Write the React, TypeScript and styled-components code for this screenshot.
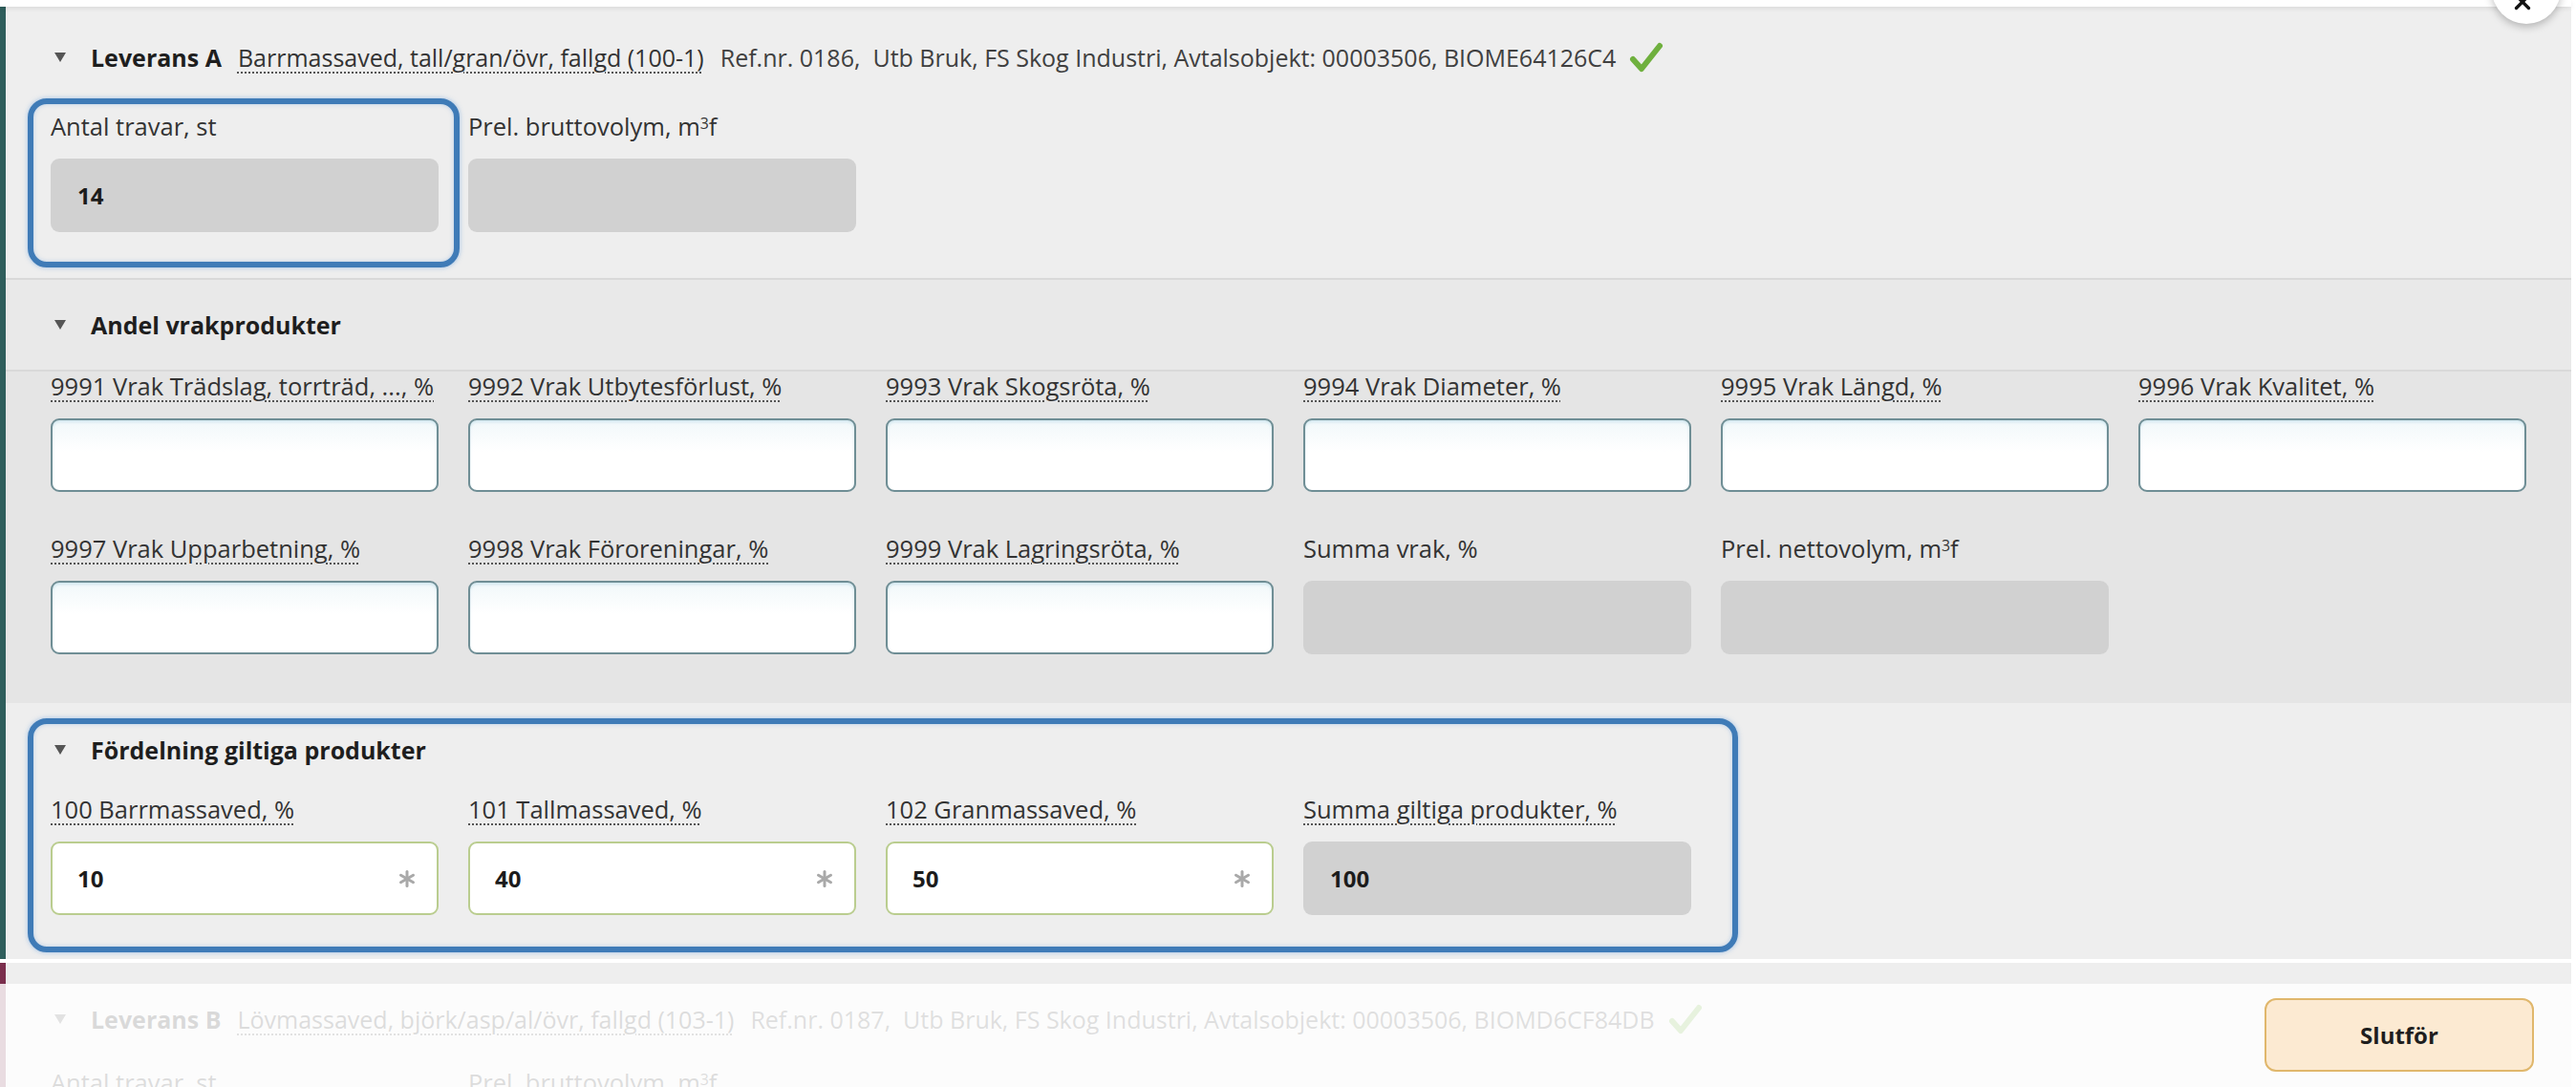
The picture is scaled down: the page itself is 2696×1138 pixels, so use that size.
import React from "react";
import styled, { createGlobalStyle, css } from "styled-components";
import { Asterisk, X } from "lucide-react";

const GlobalStyle = createGlobalStyle`
  html, body { margin: 0; padding: 0; background: #ffffff; }
  body {
    font-family: "Open Sans", "Noto Sans", "Liberation Sans", sans-serif;
    color: #333333;
    overflow: hidden;
  }
  * { box-sizing: border-box; }
`;

const Page = styled.div`
  position: relative;
  width: 2696px;
  height: 1138px;
  overflow: hidden;
  background: #ffffff;
  padding-right: 5px;
`;

const TopStrip = styled.div`
  position: relative;
  z-index: 2;
  height: 7px;
  background: #ffffff;
  box-shadow: 0 2px 5px rgba(0, 0, 0, 0.08);
`;

const Delivery = styled.section<{ $accent: string; $gapTop?: boolean }>`
  display: flex;
  flex-direction: column;
  background: #eeeeee;
  border-left: 6px solid ${(p) => p.$accent};
  margin-top: ${(p) => (p.$gapTop ? "4px" : "0")};
`;

const DeliveryTop = styled.div<{ $padTop: number }>`
  display: flex;
  flex-direction: column;
  gap: 32px;
  padding: ${(p) => p.$padTop}px 0 48px 47px;
`;

const HeaderRow = styled.div`
  display: flex;
  align-items: center;
  height: 50px;
  padding-left: 4px;
  font-size: 25px;
  white-space: nowrap;
`;

const Caret = styled.svg`
  width: 12px;
  height: 10px;
  flex: none;
  fill: #555555;
`;

const Title = styled.span`
  margin-left: 26px;
  font-weight: 700;
  color: #1e1e1e;
`;

const Product = styled.span`
  margin-left: 17px;
  color: #333333;
  text-decoration: underline dotted #555555;
  text-decoration-thickness: 2px;
  text-underline-offset: 5px;
`;

const Meta = styled.span`
  margin-left: 17px;
  color: #404040;
`;

const CheckMark = styled.svg`
  margin-left: 14px;
  width: 36px;
  height: 34px;
  flex: none;
`;

const FieldGrid = styled.div`
  display: grid;
  grid-template-columns: repeat(6, 406px);
  column-gap: 31px;
  row-gap: 44px;
`;

const FieldCell = styled.div<{ $highlight?: boolean }>`
  position: relative;
  display: flex;
  flex-direction: column;
  gap: 19px;
  ${(p) =>
    p.$highlight &&
    css`
      &::after {
        content: "";
        position: absolute;
        top: -14px;
        left: -24px;
        right: -22px;
        bottom: -37px;
        border: 6px solid #3f7bb7;
        border-radius: 20px;
        box-shadow: 0 0 5px rgba(120, 170, 225, 0.7), inset 0 0 4px rgba(120, 170, 225, 0.5);
        pointer-events: none;
      }
    `}
`;

const Label = styled.label<{ $dotted?: boolean }>`
  height: 30px;
  line-height: 30px;
  font-size: 25.5px;
  color: #333333;
  white-space: nowrap;
  ${(p) =>
    p.$dotted &&
    css`
      text-decoration: underline dotted #555555;
      text-decoration-thickness: 2px;
      text-underline-offset: 5px;
    `}
`;

const Sup = styled.span`
  font-size: 0.62em;
  vertical-align: 0.45em;
  line-height: 0;
`;

type Variant = "edit" | "readonly" | "valid";

const InputBox = styled.div<{ $variant: Variant }>`
  height: 77px;
  display: flex;
  align-items: center;
  padding: 0 16px 0 26px;
  border-radius: 9px;
  border: 2px solid transparent;
  ${(p) =>
    p.$variant === "edit" &&
    css`
      background: linear-gradient(#f1f8fa, #ffffff 45%);
      border-color: #6f8e95;
      box-shadow: inset 0 2px 3px rgba(150, 200, 220, 0.35);
    `}
  ${(p) =>
    p.$variant === "readonly" &&
    css`
      background: #d1d1d1;
    `}
  ${(p) =>
    p.$variant === "valid" &&
    css`
      background: #ffffff;
      border-color: #bacd8f;
    `}
`;

const ValueInput = styled.input`
  flex: 1;
  min-width: 0;
  border: none;
  outline: none;
  background: transparent;
  padding: 0;
  font-family: inherit;
  font-size: 24px;
  font-weight: 700;
  color: #1c1c1c;
`;

const Required = styled(Asterisk)`
  flex: none;
  color: #a9a9a9;
`;

const SubHeader = styled.div`
  display: flex;
  align-items: center;
  height: 98px;
  padding-left: 51px;
  background: #e9e9e9;
  border-top: 2px solid #d9d9d9;
  border-bottom: 2px solid #d9d9d9;
  font-size: 25px;
`;

const SubTitle = styled.span`
  margin-left: 26px;
  font-weight: 700;
  color: #1e1e1e;
`;

const ScrapArea = styled.div`
  background: #e5e5e5;
  padding: 0 0 51px 47px;
`;

const Distribution = styled.div`
  position: relative;
  display: flex;
  flex-direction: column;
  gap: 22px;
  padding: 24px 0 46px 47px;
  &::after {
    content: "";
    position: absolute;
    top: 16px;
    left: 23px;
    width: 1778px;
    bottom: 7px;
    border: 6px solid #3f7bb7;
    border-radius: 20px;
    box-shadow: 0 0 5px rgba(120, 170, 225, 0.7), inset 0 0 4px rgba(120, 170, 225, 0.5);
    pointer-events: none;
  }
`;

const SectionBBody = styled.div`
  display: flex;
  flex-direction: column;
  gap: 26px;
  padding: 34px 0 60px 47px;
`;

const Footer = styled.footer`
  position: absolute;
  left: 0;
  right: 0;
  top: 1030px;
  bottom: 0;
  display: flex;
  justify-content: flex-end;
  align-items: flex-start;
  padding: 15px 44px 0 0;
  background: rgba(255, 255, 255, 0.83);
  z-index: 3;
`;

const FinishButton = styled.button`
  width: 282px;
  height: 77px;
  border-radius: 12px;
  border: 2px solid #e0b76c;
  background: #fcead2;
  font-family: inherit;
  font-size: 24px;
  font-weight: 700;
  color: #1e1e1e;
  cursor: pointer;
`;

const CloseButton = styled.button`
  position: absolute;
  top: -47px;
  left: 2608px;
  width: 72px;
  height: 72px;
  border-radius: 50%;
  border: none;
  background: #ffffff;
  box-shadow: 0 3px 8px rgba(0, 0, 0, 0.25);
  display: flex;
  align-items: flex-end;
  justify-content: center;
  padding: 0 8px 10px 0;
  color: #111111;
  z-index: 4;
`;

type FieldDef = {
  label: React.ReactNode;
  key: string;
  dotted?: boolean;
  variant: Variant;
  value?: string;
  required?: boolean;
  highlight?: boolean;
};

const CaretIcon = () => (
  <Caret viewBox="0 0 12 10">
    <path d="M0 0 H12 L6 10 Z" />
  </Caret>
);

const Check = ({ faded }: { faded?: boolean }) => (
  <CheckMark viewBox="0 0 36 34">
    <path
      d="M4 19 L13 29 L32 5"
      fill="none"
      stroke={faded ? "#9ccc6e" : "#6fb03e"}
      strokeWidth="6"
      strokeLinecap="round"
      strokeLinejoin="round"
    />
  </CheckMark>
);

const Field = ({ f }: { f: FieldDef }) => (
  <FieldCell $highlight={f.highlight}>
    <Label $dotted={f.dotted}>{f.label}</Label>
    <InputBox $variant={f.variant}>
      <ValueInput readOnly={f.variant === "readonly"} defaultValue={f.value ?? ""} />
      {f.required && <Required size={30} strokeWidth={2.4} />}
    </InputBox>
  </FieldCell>
);

const brutto = (
  <>
    Prel. bruttovolym, m<Sup>3</Sup>f
  </>
);
const netto = (
  <>
    Prel. nettovolym, m<Sup>3</Sup>f
  </>
);

const topFields: FieldDef[] = [
  { key: "antal", label: "Antal travar, st", variant: "readonly", value: "14", highlight: true },
  { key: "brutto", label: brutto, variant: "readonly" },
];

const scrapFields: FieldDef[] = [
  { key: "9991", label: "9991 Vrak Trädslag, torrträd, ..., %", dotted: true, variant: "edit" },
  { key: "9992", label: "9992 Vrak Utbytesförlust, %", dotted: true, variant: "edit" },
  { key: "9993", label: "9993 Vrak Skogsröta, %", dotted: true, variant: "edit" },
  { key: "9994", label: "9994 Vrak Diameter, %", dotted: true, variant: "edit" },
  { key: "9995", label: "9995 Vrak Längd, %", dotted: true, variant: "edit" },
  { key: "9996", label: "9996 Vrak Kvalitet, %", dotted: true, variant: "edit" },
  { key: "9997", label: "9997 Vrak Upparbetning, %", dotted: true, variant: "edit" },
  { key: "9998", label: "9998 Vrak Föroreningar, %", dotted: true, variant: "edit" },
  { key: "9999", label: "9999 Vrak Lagringsröta, %", dotted: true, variant: "edit" },
  { key: "summa", label: "Summa vrak, %", variant: "readonly" },
  { key: "netto", label: netto, variant: "readonly" },
];

const distFields: FieldDef[] = [
  { key: "100", label: "100 Barrmassaved, %", dotted: true, variant: "valid", value: "10", required: true },
  { key: "101", label: "101 Tallmassaved, %", dotted: true, variant: "valid", value: "40", required: true },
  { key: "102", label: "102 Granmassaved, %", dotted: true, variant: "valid", value: "50", required: true },
  { key: "sum", label: "Summa giltiga produkter, %", dotted: true, variant: "readonly", value: "100" },
];

export default function App() {
  return (
    <Page>
      <GlobalStyle />
      <TopStrip />
      <CloseButton aria-label="Stäng">
        <X size={26} strokeWidth={3} />
      </CloseButton>

      <Delivery $accent="#2f5e5c">
        <DeliveryTop $padTop={28}>
          <HeaderRow>
            <CaretIcon />
            <Title>Leverans A</Title>
            <Product>Barrmassaved, tall/gran/övr, fallgd (100-1)</Product>
            <Meta>
              Ref.nr. 0186,&nbsp; Utb Bruk, FS Skog Industri, Avtalsobjekt: 00003506, BIOME64126C4
            </Meta>
            <Check />
          </HeaderRow>
          <FieldGrid>
            {topFields.map((f) => (
              <Field key={f.key} f={f} />
            ))}
          </FieldGrid>
        </DeliveryTop>

        <SubHeader>
          <CaretIcon />
          <SubTitle>Andel vrakprodukter</SubTitle>
        </SubHeader>
        <ScrapArea>
          <FieldGrid>
            {scrapFields.map((f) => (
              <Field key={f.key} f={f} />
            ))}
          </FieldGrid>
        </ScrapArea>

        <Distribution>
          <HeaderRow>
            <CaretIcon />
            <Title>Fördelning giltiga produkter</Title>
          </HeaderRow>
          <FieldGrid>
            {distFields.map((f) => (
              <Field key={f.key} f={f} />
            ))}
          </FieldGrid>
        </Distribution>
      </Delivery>

      <Delivery $accent="#7b2f4d" $gapTop>
        <SectionBBody>
          <HeaderRow>
            <CaretIcon />
            <Title>Leverans B</Title>
            <Product>Lövmassaved, björk/asp/al/övr, fallgd (103-1)</Product>
            <Meta>
              Ref.nr. 0187,&nbsp; Utb Bruk, FS Skog Industri, Avtalsobjekt: 00003506, BIOMD6CF84DB
            </Meta>
            <Check />
          </HeaderRow>
          <FieldGrid>
            {topFields.map((f) => (
              <Field key={f.key} f={{ ...f, value: undefined, highlight: false }} />
            ))}
          </FieldGrid>
        </SectionBBody>
      </Delivery>

      <Footer>
        <FinishButton>Slutför</FinishButton>
      </Footer>
    </Page>
  );
}
